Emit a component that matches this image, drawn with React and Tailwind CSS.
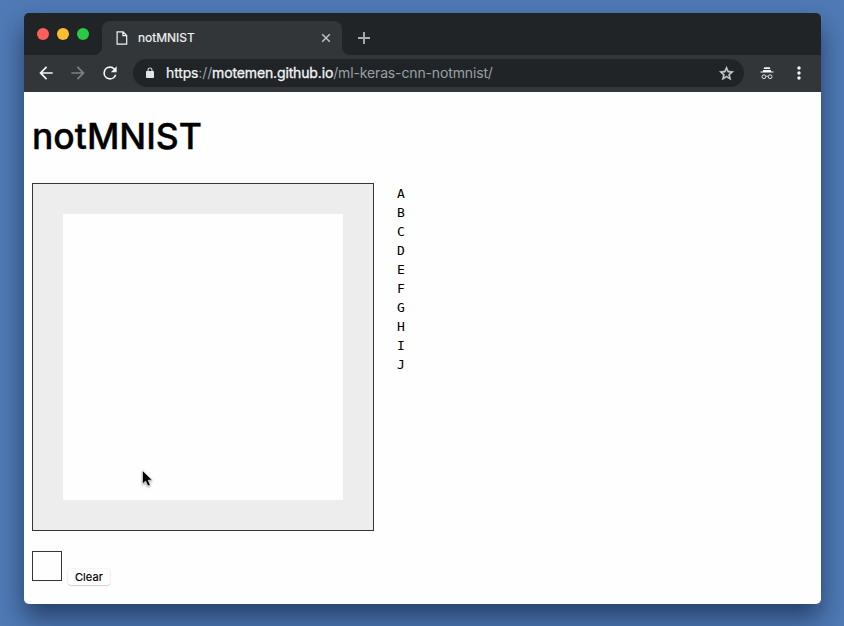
import React from "react";

const letters = ["A", "B", "C", "D", "E", "F", "G", "H", "I", "J"];

function Icon({ d, className }) {
  return (
    <svg viewBox="0 0 24 24" fill="currentColor" className={"shrink-0 " + className}>
      <path d={d} />
    </svg>
  );
}

function TabStrip() {
  return (
    <div className="flex h-[42px] items-end bg-[#202427]">
      <div className="mb-[15px] ml-[13px] flex gap-2">
        <span className="size-3 rounded-full bg-[#ff5f5c]" />
        <span className="size-3 rounded-full bg-[#fdbd2f]" />
        <span className="size-3 rounded-full bg-[#28cb43]" />
      </div>
      <svg viewBox="0 0 8 8" className="ml-[5px] size-2 shrink-0 text-[#323639]" fill="currentColor">
        <path d="M8 0v8H0a8 8 0 0 0 8-8z" />
      </svg>
      <div className="flex h-[34px] w-[240px] items-center rounded-t-lg bg-[#323639] pr-[11px] pl-[14px]">
        <svg viewBox="0 0 12 14" className="h-3.5 w-3 shrink-0" fill="none" stroke="#f1f3f4" strokeWidth="1.2">
          <path d="M1.1.8h6l3.6 3.7v8.7H1.1zM6.9.8v3.9h3.8" />
        </svg>
        <span className="ml-[10px] flex-1 text-[12px] leading-4 text-[#f1f3f4] [-webkit-text-stroke:0.2px]">
          notMNIST
        </span>
        <svg viewBox="0 0 10 10" className="size-2.5 shrink-0" stroke="#bdc1c6" strokeWidth="1.5">
          <path d="M1.2 1.2l7.6 7.6M8.8 1.2L1.2 8.8" />
        </svg>
      </div>
      <svg viewBox="0 0 8 8" className="size-2 shrink-0 text-[#323639]" fill="currentColor">
        <path d="M0 0v8h8a8 8 0 0 1-8-8z" />
      </svg>
      <svg viewBox="0 0 12 12" className="mb-[11px] ml-2 size-3 shrink-0" stroke="#a9adb1" strokeWidth="1.9">
        <path d="M6 0v12M0 6h12" />
      </svg>
    </div>
  );
}

function Toolbar() {
  return (
    <div className="flex h-[37px] items-center bg-[#323639] pb-px pl-3 text-[#f4f5f6]">
      <Icon className="size-5" d="M20 11H7.83l5.59-5.59L12 4l-8 8 8 8 1.41-1.41L7.83 13H20v-2z" />
      <Icon className="ml-3 size-5 text-[#7e8184]" d="M12 4l-1.41 1.41L16.17 11H4v2h12.17l-5.58 5.59L12 20l8-8z" />
      <Icon
        className="ml-3 size-5"
        d="M17.65 6.35A7.958 7.958 0 0 0 12 4a8 8 0 1 0 7.73 10h-2.08A6 6 0 1 1 12 6c1.66 0 3.14.69 4.22 1.78L13 11h7V4l-2.35 2.35z"
      />
      <div className="ml-[13px] flex h-7 w-[611px] items-center rounded-full bg-[#202427] pr-[9px] pl-[11px]">
        <Icon
          className="size-3 text-[#e2e4e6]"
          d="M18 8h-1V6c0-2.76-2.24-5-5-5S7 3.24 7 6v2H6c-1.1 0-2 .9-2 2v10c0 1.1.9 2 2 2h12c1.1 0 2-.9 2-2V10c0-1.1-.9-2-2-2zM9 8V6c0-1.66 1.34-3 3-3s3 1.34 3 3v2H9z"
        />
        <p className="ml-[10px] flex-1 text-[14px] leading-5 tracking-[-0.14px] whitespace-nowrap text-[#9aa0a6]">
          <span className="text-[#f4f5f6] [-webkit-text-stroke:0.2px]">https</span>://
          <span className="text-[#f4f5f6] [-webkit-text-stroke:0.3px]">motemen.github.io</span>
          /ml-keras-cnn-notmnist/
        </p>
        <Icon
          className="size-[17px] stroke-[#c9ccd0] stroke-[0.7] text-[#c9ccd0]"
          d="M22 9.24l-7.19-.62L12 2 9.19 8.63 2 9.24l5.46 4.73L5.82 21 12 17.27 18.18 21l-1.63-7.03L22 9.24zM12 15.4l-3.76 2.27 1-4.28-3.32-2.88 4.38-.38L12 6.1l1.71 4.04 4.38.38-3.32 2.88 1 4.28L12 15.4z"
        />
      </div>
      <svg viewBox="0 0 14 14" className="ml-4 size-3.5 shrink-0" fill="currentColor">
        <path d="M4.2 1.2h5.6l.5 1.900H3.700zM3.200 4.100h7.600l.5 1.500H13.500v1H.5v-1h2.200z" />
        <g fill="none" stroke="currentColor" strokeWidth="0.9">
          <circle cx="3.900" cy="10.700" r="1.900" />
          <circle cx="10.100" cy="10.700" r="1.900" />
          <path d="M5.800 10.500c.8-.5 1.600-.5 2.400 0" />
        </g>
      </svg>
      <Icon
        className="ml-[15px] size-5"
        d="M12 8c1.100 0 2-.9 2-2s-.9-2-2-2-2 .9-2 2 .9 2 2 2zm0 2c-1.100 0-2 .9-2 2s.9 2 2 2 2-.9 2-2-.9-2-2-2zm0 6c-1.100 0-2 .9-2 2s.9 2 2 2 2-.9 2-2-.9-2-2-2z"
      />
    </div>
  );
}

function Page() {
  return (
    <main className="h-[512px] bg-[#fefefe] px-2 pt-[21px] text-black">
      <h1 className="h-[70px] text-[35.5px] leading-[48px] font-medium [-webkit-text-stroke:0.4px]">notMNIST</h1>
      <div className="flex">
        <div className="relative h-[348px] w-[342px] border border-[#333538] bg-[#ededed] pt-[30px] pl-[30px]">
          <div className="h-[286px] w-[280px] bg-[#fefefe]" />
          <svg viewBox="0 0 14 20" className="absolute top-[285px] left-[108px] h-5 w-3.5 drop-shadow-[0_1px_1px_rgba(0,0,0,0.4)]">
            <path
              d="M1.500 1.500v13.500l3.100-2.900 2.200 4.900 2.500-1.100-2.200-4.700h4.200z"
              fill="#000"
              stroke="#fff"
              strokeWidth="0.6"
            />
          </svg>
        </div>
        <ul className="ml-[23px] pt-px font-['DejaVu_Sans_Mono',monospace] text-[13px] leading-[19px]">
          {letters.map((letter) => (
            <li key={letter}>{letter}</li>
          ))}
        </ul>
      </div>
      <div className="mt-5 flex items-start">
        <div className="size-[30px] border border-[#333538] bg-[#fefefe]" />
        <button className="mt-[18px] ml-1.5 h-4 w-[42px] rounded-[3px] bg-white text-[11px] leading-4 tracking-[0.1px] shadow-[0_0_0_0.5px_rgba(0,0,0,0.08),0_1px_1px_rgba(0,0,0,0.15)] [-webkit-text-stroke:0.2px]">
          Clear
        </button>
      </div>
    </main>
  );
}

export default function App() {
  return (
    <div className="h-[626px] w-[844px] overflow-hidden bg-[#4f7ab5] pt-[13px] pl-6 font-['Inter',sans-serif]">
      <div className="w-[797px] rounded-[5px] shadow-[0_14px_26px_rgba(10,25,55,0.6)]">
        <div className="overflow-hidden rounded-[5px]">
          <TabStrip />
          <Toolbar />
          <Page />
        </div>
      </div>
    </div>
  );
}
